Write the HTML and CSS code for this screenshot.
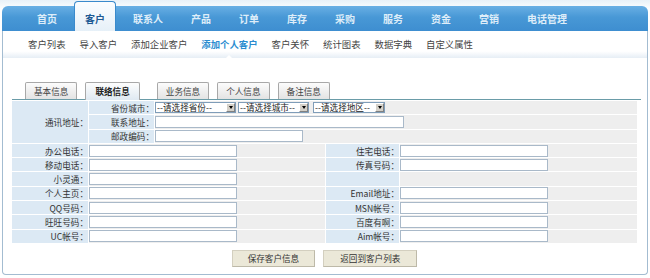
FILE: index.html
```html
<!DOCTYPE html>
<html lang="zh-CN">
<head>
    <meta charset="UTF-8">
    <meta name="viewport" content="width=device-width, initial-scale=1.0">
    <title>添加个人客户</title>
    <link rel="stylesheet" href="styles.css">
</head>
<body>
    <div class="frame">
        <ul class="mainnav">
            <li>首页</li>
            <li class="on">客户</li>
            <li>联系人</li>
            <li>产品</li>
            <li>订单</li>
            <li>库存</li>
            <li>采购</li>
            <li>服务</li>
            <li>资金</li>
            <li>营销</li>
            <li>电话管理</li>
        </ul>
        <ul class="subnav">
            <li>客户列表</li>
            <li>导入客户</li>
            <li>添加企业客户</li>
            <li class="on">添加个人客户</li>
            <li>客户关怀</li>
            <li>统计图表</li>
            <li>数据字典</li>
            <li>自定义属性</li>
        </ul>

        <div class="content">
            <div class="tabs">
                <span class="tab">基本信息</span>
                <span class="tab on">联络信息</span>
                <span class="tab">业务信息</span>
                <span class="tab">个人信息</span>
                <span class="tab">备注信息</span>
            </div>

            <div class="panel">
                <div class="addr">
                    <div class="lbl big">通讯地址：</div>
                    <div class="lbl">省份城市：</div>
                    <div class="val">
                        <span class="select w-prov"><select><option>--请选择省份--</option></select><i class="drop"></i></span>
                        <span class="select w-city"><select><option>--请选择城市--</option></select><i class="drop"></i></span>
                        <span class="select w-area"><select><option>--请选择地区--</option></select><i class="drop"></i></span>
                    </div>
                    <div class="lbl">联系地址：</div>
                    <div class="val"><input type="text" class="txt long"></div>
                    <div class="lbl">邮政编码：</div>
                    <div class="val"><input type="text" class="txt"></div>
                </div>

                <div class="contact">
                    <div class="lbl">办公电话：</div>
                    <div class="val"><input type="text" class="txt"></div>
                    <div class="lbl">住宅电话：</div>
                    <div class="val"><input type="text" class="txt"></div>

                    <div class="lbl">移动电话：</div>
                    <div class="val"><input type="text" class="txt"></div>
                    <div class="lbl">传真号码：</div>
                    <div class="val"><input type="text" class="txt"></div>

                    <div class="lbl">小灵通：</div>
                    <div class="val"><input type="text" class="txt"></div>
                    <div class="lbl"></div>
                    <div class="val"></div>

                    <div class="lbl">个人主页：</div>
                    <div class="val"><input type="text" class="txt"></div>
                    <div class="lbl">Email地址：</div>
                    <div class="val"><input type="text" class="txt"></div>

                    <div class="lbl">QQ号码：</div>
                    <div class="val"><input type="text" class="txt"></div>
                    <div class="lbl">MSN帐号：</div>
                    <div class="val"><input type="text" class="txt"></div>

                    <div class="lbl">旺旺号码：</div>
                    <div class="val"><input type="text" class="txt"></div>
                    <div class="lbl">百度有啊：</div>
                    <div class="val"><input type="text" class="txt"></div>

                    <div class="lbl">UC帐号：</div>
                    <div class="val"><input type="text" class="txt"></div>
                    <div class="lbl">Aim帐号：</div>
                    <div class="val"><input type="text" class="txt"></div>
                </div>

                <div class="actions">
                    <button type="button" class="btn">保存客户信息</button>
                    <button type="button" class="btn wide">返回到客户列表</button>
                </div>
            </div>
        </div>
    </div>
</body>
</html>
```

FILE: styles.css
```css
body {
    margin: 0;
    font-family: "Noto Sans CJK SC", "Noto Sans", sans-serif;
    color: #333;
    background: linear-gradient(#e8f1f8, #ffffff 10px) no-repeat;
}
ul {
    list-style: none;
    margin: 0;
    padding: 0;
}
.frame {
    width: 646px;
    margin-left: 2px;
}

/* top menu */
.mainnav {
    display: flex;
    gap: 6px;
    height: 25px;
    margin-top: 6px;
    padding-left: 24px;
    border-radius: 6px 6px 0 0;
    background: linear-gradient(#69afe4, #4898d6 45%, #3e8ed0);
}
.mainnav li {
    padding: 0 11px;
    line-height: 25px;
    font-size: 10px;
    font-weight: bold;
    color: #deedf9;
}
.mainnav li.on {
    margin-top: -5px;
    height: 30px;
    box-sizing: border-box;
    padding: 4px 10px 0;
    border: 1px solid #3a8acc;
    border-bottom: none;
    border-radius: 4px 4px 0 0;
    background: linear-gradient(#fbfdff, #e6f0f8);
    color: #1d5a93;
}

/* sub menu */
.subnav {
    display: flex;
    gap: 14px;
    height: 27px;
    padding-left: 25px;
    border-left: 1px solid #a3bcd1;
    border-right: 1px solid #a3bcd1;
    background: linear-gradient(#ffffff 75%, #e6eef5);
}
.subnav li {
    line-height: 27px;
    font-size: 9.4px;
    color: #444;
}
.subnav li.on {
    position: relative;
    color: #2a8cd0;
    font-weight: bold;
}
.subnav li.on::after {
    content: "";
    position: absolute;
    left: 50%;
    bottom: 0;
    margin-left: -3px;
    border-left: 3px solid transparent;
    border-right: 3px solid transparent;
    border-bottom: 3px solid #ffffff;
}

/* form area */
.content {
    padding: 24px 6px 7px 9px;
    border: 1px solid #a3bcd1;
    border-top: none;
    border-radius: 0 0 4px 4px;
    font-size: 8.6px;
}
.tabs {
    display: flex;
    align-items: flex-end;
    gap: 8px;
    padding-left: 13px;
    border-bottom: 1px solid #6a9ca8;
}
.tab {
    height: 17px;
    box-sizing: border-box;
    padding: 0 8px;
    line-height: 16px;
    border: 1px solid #a8a8a8;
    border-bottom: none;
    border-radius: 2px 2px 0 0;
    background: linear-gradient(#fcfcfc, #e3e3e3);
    color: #444;
}
.tab.on {
    margin-right: 9px;
    margin-bottom: -1px;
    height: 18px;
    padding: 0 9px;
    font-weight: bold;
    color: #222;
    background: linear-gradient(#fdfdfd, #dfe9f2);
}
.panel {
    margin-right: 4px;
    padding-top: 1px;
}
.addr,
.contact {
    display: grid;
    gap: 1px;
    grid-auto-rows: 13.3px;
}
.addr {
    grid-template-columns: 76px 65px 1fr;
    margin-bottom: 1px;
}
.contact {
    grid-template-columns: 76px 236px 73px 1fr;
}
.lbl {
    display: flex;
    align-items: center;
    justify-content: flex-end;
    background: #dce9f4;
    color: #333;
    white-space: nowrap;
}
.lbl.big {
    grid-row: span 3;
}
.val {
    display: flex;
    align-items: center;
    gap: 2px;
    background: #eeeeee;
}
.txt {
    width: 148px;
    height: 12px;
    box-sizing: border-box;
    padding: 0 2px;
    border: 1px solid #a9b9c9;
    background: #fff;
    font-size: 8.6px;
}
.txt.long {
    width: 249px;
}
.select {
    display: flex;
    align-items: center;
    height: 11px;
    box-sizing: border-box;
    border: 1px solid #7f9db9;
    background: #fff;
}
.select select {
    flex: 1;
    min-width: 0;
    height: 9px;
    padding: 0 1px;
    border: none;
    appearance: none;
    background: #fff;
    font-family: inherit;
    font-size: 8.6px;
    line-height: 9px;
    color: #222;
}
.w-prov { width: 81px; }
.w-city { width: 71px; margin-right: 2px; }
.w-area { width: 72px; }
.drop {
    display: flex;
    align-items: center;
    justify-content: center;
    width: 9px;
    height: 9px;
    box-sizing: border-box;
    border: 1px solid;
    border-color: #ffffff #808080 #808080 #ffffff;
    background: #d4d0c8;
}
.drop::before {
    content: "";
    border-left: 2.5px solid transparent;
    border-right: 2.5px solid transparent;
    border-top: 3px solid #000;
}
.actions {
    display: flex;
    justify-content: center;
    gap: 8px;
    margin-top: 7px;
}
.btn {
    height: 17px;
    padding: 0 15px;
    border: 1px solid #d3cfbf;
    border-right-color: #bdb9a8;
    border-bottom-color: #bdb9a8;
    background: #ebe8d8;
    font-family: inherit;
    font-size: 8.6px;
    color: #333;
}
.btn.wide {
    padding: 0 16px;
}
```
